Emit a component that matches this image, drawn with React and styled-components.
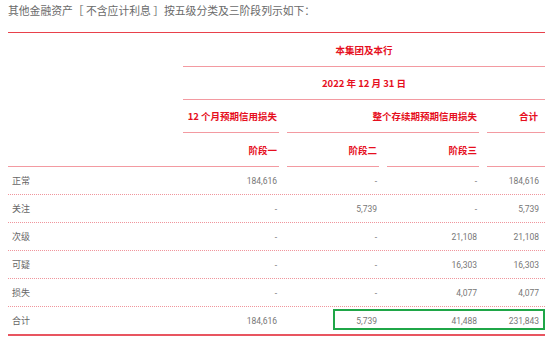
import React from "react";
import styled, { createGlobalStyle } from "styled-components";

const Global = createGlobalStyle`
  html, body { margin: 0; padding: 0; background: #fff; }
  body { font-family: "Noto Sans CJK SC", "Noto Sans", sans-serif; }
`;

const Page = styled.div`
  width: 537px;
  padding: 0 5px 0 8px;
`;

const Title = styled.div`
  font-size: 10.8px;
  line-height: 20px;
  color: #6a6a6a;
  padding-bottom: 12px;
  border-bottom: 1px solid #e8414b;
  white-space: nowrap;
`;

const COLS = "175px 96px 100px 100px 66px";

const HeadRow = styled.div`
  display: grid;
  grid-template-columns: ${COLS};
  height: ${(p) => p.$h}px;
`;

const HeadCell = styled.div`
  grid-column: ${(p) => p.$span || "auto"};
  display: flex;
  padding-left: ${(p) => (p.$gap ? 8 : 0)}px;
`;

const HeadInner = styled.div`
  flex: 1;
  display: flex;
  align-items: center;
  justify-content: ${(p) => (p.$center ? "center" : "flex-end")};
  padding-right: ${(p) => p.$pr ?? 2}px;
  border-bottom: ${(p) => (p.$line ? "1px solid #f39aa1" : "none")};
  color: #e60f1e;
  font-weight: 700;
  font-size: 9.5px;
  white-space: nowrap;
`;

const BodyRow = styled.div`
  position: relative;
  display: grid;
  grid-template-columns: ${COLS};
  height: 27px;
  border-bottom: ${(p) => (p.$last ? "2px solid #e85560" : "1px dotted #f0959c")};
`;

const Label = styled.div`
  display: flex;
  align-items: center;
  padding-left: 4px;
  font-size: 9px;
  color: #666;
`;

const Num = styled.div`
  display: flex;
  align-items: center;
  justify-content: flex-end;
  padding-right: ${(p) => p.$pr ?? 2}px;
  font-family: Roboto, "Liberation Sans", sans-serif;
  font-size: 8.5px;
  color: #777;
`;

const Highlight = styled.div`
  position: absolute;
  left: 325px;
  right: 0;
  top: 2px;
  height: 21px;
  border: 2px solid #1fa647;
  box-sizing: border-box;
`;

const rows = [
  ["正常", "184,616", "-", "-", "184,616"],
  ["关注", "-", "5,739", "-", "5,739"],
  ["次级", "-", "-", "21,108", "21,108"],
  ["可疑", "-", "-", "16,303", "16,303"],
  ["损失", "-", "-", "4,077", "4,077"],
  ["合计", "184,616", "5,739", "41,488", "231,843"],
];

export default function App() {
  return (
    <Page>
      <Global />
      <Title>其他金融资产［ 不含应计利息 ］按五级分类及三阶段列示如下：</Title>
      <HeadRow $h={34}>
        <HeadCell />
        <HeadCell $span="2 / 6">
          <HeadInner $center $line $pr={0}>本集团及本行</HeadInner>
        </HeadCell>
      </HeadRow>
      <HeadRow $h={33}>
        <HeadCell />
        <HeadCell $span="2 / 6">
          <HeadInner $center $line $pr={0}>2022 年 12 月 31 日</HeadInner>
        </HeadCell>
      </HeadRow>
      <HeadRow $h={33}>
        <HeadCell />
        <HeadCell>
          <HeadInner $line>12 个月预期信用损失</HeadInner>
        </HeadCell>
        <HeadCell $span="3 / 5" $gap>
          <HeadInner $line>整个存续期预期信用损失</HeadInner>
        </HeadCell>
        <HeadCell $gap>
          <HeadInner $line $pr={7}>合计</HeadInner>
        </HeadCell>
      </HeadRow>
      <HeadRow $h={34}>
        <HeadCell>
          <HeadInner $line />
        </HeadCell>
        <HeadCell>
          <HeadInner $line>阶段一</HeadInner>
        </HeadCell>
        <HeadCell $gap>
          <HeadInner $line>阶段二</HeadInner>
        </HeadCell>
        <HeadCell $gap>
          <HeadInner $line>阶段三</HeadInner>
        </HeadCell>
        <HeadCell $gap>
          <HeadInner $line $pr={7} />
        </HeadCell>
      </HeadRow>
      {rows.map((r, i) => (
        <BodyRow key={r[0]} $last={i === rows.length - 1}>
          <Label>{r[0]}</Label>
          <Num>{r[1]}</Num>
          <Num>{r[2]}</Num>
          <Num>{r[3]}</Num>
          <Num $pr={6}>{r[4]}</Num>
          {i === rows.length - 1 && <Highlight />}
        </BodyRow>
      ))}
    </Page>
  );
}
